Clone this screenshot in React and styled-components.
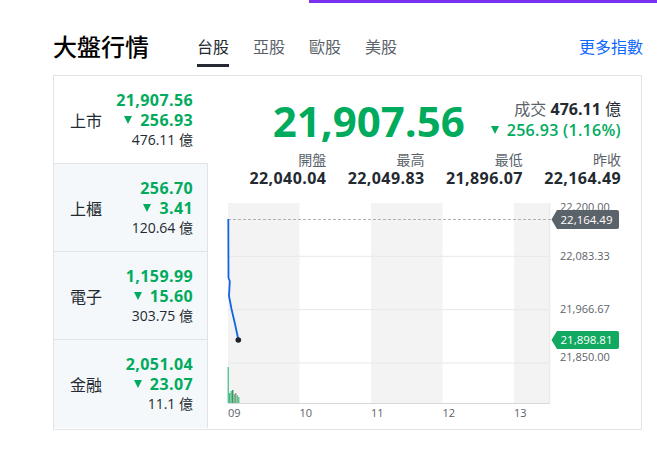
import React from "react";
import styled, { createGlobalStyle } from "styled-components";

const GREEN = "#00ab5e";
const DARK = "#232a31";
const GRAY = "#5b636a";
const LINE = "#e0e4e9";

const GlobalStyle = createGlobalStyle`
    body {
        margin: 0;
        background: #ffffff;
        font-family: 'Open Sans', 'Noto Sans CJK TC', sans-serif;
        color: ${DARK};
    }
`;

const markets = [
    { name: "上市", price: "21,907.56", change: "256.93", volume: "476.11" },
    { name: "上櫃", price: "256.70", change: "3.41", volume: "120.64" },
    { name: "電子", price: "1,159.99", change: "15.60", volume: "303.75" },
    { name: "金融", price: "2,051.04", change: "23.07", volume: "11.1" },
];

const stats = [
    { label: "開盤", value: "22,040.04" },
    { label: "最高", value: "22,049.83" },
    { label: "最低", value: "21,896.07" },
    { label: "昨收", value: "22,164.49" },
];

const tabs = ["台股", "亞股", "歐股", "美股"];

const volumeBars = [
    { x: 20.2, h: 36, c: "#4cc08a" },
    { x: 21.7, h: 10, c: "#3daa73" },
    { x: 23.2, h: 12, c: "#4cc08a" },
    { x: 24.7, h: 13, c: "#2e8a57" },
    { x: 26.2, h: 9, c: "#4cc08a" },
    { x: 27.7, h: 10, c: "#b8806e" },
    { x: 29.2, h: 8, c: "#4cc08a" },
    { x: 30.7, h: 6, c: "#4cc08a" },
];

function Chart() {
    const x0 = 20;
    const hour = 71.5;
    const bottom = 200;
    const end = x0 + hour * 4.5;
    const bands = [[0, 1], [2, 3], [4, 4.5]];
    const grid = [53.3, 106.7, 160];

    return (
        <ChartSvg width="433" height="223" viewBox="0 0 433 223">
            {bands.map(([a, b]) => (
                <rect key={a} x={x0 + a * hour} y="0" width={(b - a) * hour} height={bottom} fill="#f3f3f3" />
            ))}
            {grid.map((y) => (
                <line key={y} x1={x0} x2={end} y1={y} y2={y} stroke="#e8e8e8" strokeWidth="1" />
            ))}
            <line x1={end} x2={end} y1="0" y2={bottom} stroke="#e6e6e6" strokeWidth="1" />
            <line x1={x0} x2={end} y1={bottom + 0.5} y2={bottom + 0.5} stroke="#d6d8e0" strokeWidth="1" />
            <line x1={x0} x2="346" y1="16.5" y2="16.5" stroke="#aeb2b6" strokeWidth="1" strokeDasharray="3 2" />

            {volumeBars.map((b) => (
                <rect key={b.x} x={b.x - 0.6} y={bottom - b.h} width="1.3" height={b.h} fill={b.c} />
            ))}

            <polyline
                points="20.3,16 20.4,50 20.5,75 21.8,78 21,93 23.5,106 27,121 30,135 30.3,137"
                fill="none"
                stroke="#1064e8"
                strokeWidth="1.8"
                strokeLinejoin="round"
            />
            <circle cx="30.3" cy="137" r="2.8" fill="#1d2228" />

            {["09", "10", "11", "12", "13"].map((t, i) => (
                <AxisText key={t} x={x0 + i * hour} y="214">{t}</AxisText>
            ))}

            <AxisText x="352" y="8">22,200.00</AxisText>
            <AxisText x="352" y="57">22,083.33</AxisText>
            <AxisText x="352" y="110">21,966.67</AxisText>
            <AxisText x="352" y="158">21,850.00</AxisText>

            <path d="M343.5,16.5 L349,7 L409,7 Q411,7 411,9 L411,24 Q411,26 409,26 L349,26 Z" fill="#5b636a" />
            <TagText x="352.5" y="20.5">22,164.49</TagText>

            <path d="M343.5,137 L349,128 L409,128 Q411,128 411,130 L411,144 Q411,146 409,146 L349,146 Z" fill="#10a95f" />
            <TagText x="352.5" y="141">21,898.81</TagText>
        </ChartSvg>
    );
}

export default function App() {
    return (
        <>
            <GlobalStyle />
            <TopStrip>
                <PurpleBar />
            </TopStrip>
            <Page>
                <Header>
                    <Title>大盤行情</Title>
                    <TabList>
                        {tabs.map((t, i) => (
                            <Tab key={t} active={i === 0}>{t}</Tab>
                        ))}
                    </TabList>
                    <MoreLink>更多指數</MoreLink>
                </Header>
                <Card>
                    <MarketList>
                        {markets.map((m, i) => (
                            <MarketRow key={m.name} active={i === 0}>
                                <MarketName>{m.name}</MarketName>
                                <MarketValues>
                                    <Price>{m.price}</Price>
                                    <Price><Down />{m.change}</Price>
                                    <Volume>{m.volume} 億</Volume>
                                </MarketValues>
                            </MarketRow>
                        ))}
                    </MarketList>
                    <Detail>
                        <Summary>
                            <BigPrice>21,907.56</BigPrice>
                            <SummarySide>
                                <SideLine>
                                    <Muted>成交</Muted> <strong>476.11</strong> 億
                                </SideLine>
                                <ChangeLine><Down />256.93 (1.16%)</ChangeLine>
                            </SummarySide>
                        </Summary>
                        <StatGrid>
                            {stats.map((s) => (
                                <Stat key={s.label}>
                                    <StatLabel>{s.label}</StatLabel>
                                    <StatValue>{s.value}</StatValue>
                                </Stat>
                            ))}
                        </StatGrid>
                        <Chart />
                    </Detail>
                </Card>
            </Page>
        </>
    );
}

const TopStrip = styled.div`
    display: flex;
    justify-content: flex-end;
    height: 3px;
`;

const PurpleBar = styled.div`
    width: 348px;
    height: 3px;
    background-color: #7b2ff0;
`;

const Page = styled.div`
    width: 589px;
    margin-left: 53px;
`;

const Header = styled.div`
    display: flex;
    height: 37px;
    margin-top: 27px;
`;

const Title = styled.h1`
    margin: 0;
    font-size: 24px;
    font-weight: 500;
    line-height: 34px;
    color: #000000;
`;

const TabList = styled.div`
    display: flex;
    gap: 24px;
    margin-left: 48px;
`;

const Tab = styled.div`
    font-size: 16px;
    line-height: 34px;
    color: ${(p) => (p.active ? DARK : GRAY)};
    border-bottom: 3px solid ${(p) => (p.active ? DARK : "transparent")};
    cursor: pointer;
`;

const MoreLink = styled.a`
    margin-left: auto;
    margin-right: -1px;
    font-size: 16px;
    line-height: 34px;
    color: #0f69ff;
    cursor: pointer;
`;

const Card = styled.div`
    display: flex;
    margin-top: 8px;
    border: 1px solid ${LINE};
    padding-bottom: 1px;
`;

const MarketList = styled.ul`
    margin: 0;
    padding: 0;
    list-style: none;
    width: 154px;
    flex-shrink: 0;
    align-self: flex-start;
`;

const MarketRow = styled.li`
    box-sizing: border-box;
    height: 88px;
    display: flex;
    align-items: center;
    justify-content: space-between;
    padding: 0 14px 0 16px;
    background-color: ${(p) => (p.active ? "#ffffff" : "#f5f8fa")};
    border-bottom: 1px solid ${LINE};
    border-right: 1px solid ${(p) => (p.active ? "transparent" : LINE)};

    &:last-child {
        border-bottom: none;
        height: 88px;
    }
`;

const MarketName = styled.span`
    font-size: 16px;
    color: ${DARK};
`;

const MarketValues = styled.div`
    display: flex;
    flex-direction: column;
    align-items: flex-end;
`;

const Price = styled.div`
    display: flex;
    align-items: center;
    font-size: 16px;
    font-weight: 700;
    line-height: 20px;
    letter-spacing: 0.4px;
    color: ${GREEN};
`;

const Down = styled.span`
    display: inline-block;
    width: 0;
    height: 0;
    border-left: 4.5px solid transparent;
    border-right: 4.5px solid transparent;
    border-top: 8px solid ${GREEN};
    margin-right: 8px;
`;

const Volume = styled.div`
    font-size: 14px;
    line-height: 20px;
    color: ${DARK};
`;

const Detail = styled.div`
    flex: 1;
    padding: 16px 20px 0;
    display: flex;
    flex-direction: column;
`;

const Summary = styled.div`
    display: flex;
    justify-content: flex-end;
    align-items: center;
    gap: 26px;
    height: 58px;
`;

const BigPrice = styled.div`
    font-size: 42px;
    font-weight: 700;
    line-height: 58px;
    color: ${GREEN};
`;

const SummarySide = styled.div`
    display: flex;
    flex-direction: column;
    align-items: flex-end;
    margin-top: -3px;
`;

const SideLine = styled.div`
    font-size: 16px;
    line-height: 21px;
    color: ${DARK};

    strong {
        font-weight: 700;
    }
`;

const Muted = styled.span`
    color: ${GRAY};
`;

const ChangeLine = styled.div`
    display: flex;
    align-items: center;
    font-size: 16px;
    font-weight: 600;
    line-height: 21px;
    letter-spacing: 0.3px;
    color: ${GREEN};
`;

const StatGrid = styled.div`
    display: grid;
    grid-template-columns: repeat(4, 1fr);
`;

const Stat = styled.div`
    display: flex;
    flex-direction: column;
    align-items: flex-end;
`;

const StatLabel = styled.span`
    font-size: 14px;
    line-height: 19px;
    color: ${GRAY};
`;

const StatValue = styled.span`
    font-size: 16px;
    font-weight: 700;
    line-height: 19px;
    letter-spacing: 0.4px;
    color: ${DARK};
`;

const ChartSvg = styled.svg`
    display: block;
    margin: 15px -20px 0;
    overflow: hidden;
`;

const AxisText = styled.text`
    font-family: 'Open Sans', sans-serif;
    font-size: 11px;
    fill: ${GRAY};
`;

const TagText = styled.text`
    font-family: 'Open Sans', sans-serif;
    font-size: 11.5px;
    fill: #ffffff;
`;
